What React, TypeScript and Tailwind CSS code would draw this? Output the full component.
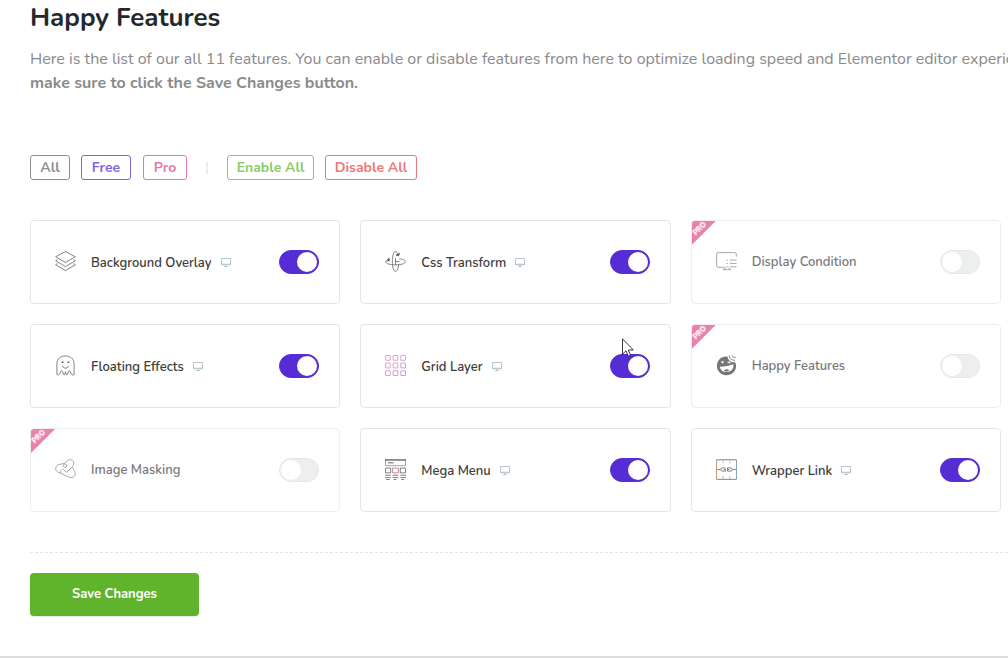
import React, { useState } from 'react';

interface Feature {
  id: string;
  label: string;
  icon: React.FC;
  isPro?: boolean;
}

const iconProps = {
  className: 'w-[21px] h-[21px] mb-[2px] shrink-0',
  viewBox: '0 0 22 22',
  fill: 'none',
  stroke: '#5c5c5c',
  strokeWidth: 0.8,
  'aria-hidden': true,
} as const;

const LayersIcon = () => (
  <svg {...iconProps}>
    <path d="M11 0.6 21.3 6 11 12 0.7 6Z" />
    <path d="M2.600 9 0.700 10.200 11 16.300 21.300 10.200 19.400 9M2.600 13 0.700 14.400 11 20.600 21.300 14.400 19.400 13" />
  </svg>
);

const TransformIcon = () => (
  <svg {...iconProps}>
    <path d="M14 4.600C13.500 2.200 12.400 0.600 11 0.600 9 0.600 7.700 5 7.700 11S9 21.200 11 21.200c1.800 0 3.100-3 3.300-7.200" />
    <path d="M4.500 9C2.200 9.500 0.700 10.300 0.700 11.200c0 2 4.600 3.300 10.300 3.300s10.300-1.300 10.300-3.300c0-1.500-2.600-2.600-6.300-3.100" />
    <path d="M11 7.500v7M11 11h4" />
    <path d="M15.200 2.500 14.200 5.200 11.600 4.200ZM3.800 7.300 5 9.600 2.800 10.800Z" fill="#555" />
  </svg>
);

const DisplayIcon = () => (
  <svg {...iconProps}>
    <path d="M9 17H2.200Q.7 17 .7 15.500V3.200Q.7 1.700 2.200 1.700H19.800Q21.300 1.700 21.300 3.200V6" />
    <path d="M11 9.500h1.500M14.500 9.500h7M11 13h1.500M14.500 13h7M11 16.500h1.500M14.500 16.500h7M10.500 17.500 7.500 19.500M13 17.500l2.500 2M7.500 19.500h8" />
  </svg>
);

const GhostIcon = () => (
  <svg {...iconProps}>
    <path d="M2 20.500V9C2 4 6 1 11 1s9 3 9 8v11.500q-2 1.200-3-.8l-1-2.500q-1-1.500-2 0l-.8 3q-.8 1-1.600 0l-.6-2.500-.6 2.500q-.8 1-1.600 0L8 17.200q-1-1.500-2 0l-1 2.500q-1 2-3 .8Z" />
    <path d="M7.300 11.800q3.700 4 7.400 0" />
    <path d="M7 7.500h2M13 7.500h2" strokeWidth="1.600" />
  </svg>
);

const GridIcon = () => (
  <svg {...iconProps} stroke="url(#gridTint)">
    <defs>
      <linearGradient id="gridTint" x1="0" y1="0" x2="22" y2="22" gradientUnits="userSpaceOnUse">
        <stop offset="0" stopColor="#f277a6" />
        <stop offset="0.5" stopColor="#d183bd" />
        <stop offset="1" stopColor="#9a78d8" />
      </linearGradient>
    </defs>
    {[0.5, 8.5, 16.5].map((y) =>
      [0.5, 8.5, 16.5].map((x) => <rect key={`${x}-${y}`} x={x} y={y} width="5" height="5" rx="0.5" />)
    )}
  </svg>
);

const HappyIcon = () => (
  <svg {...iconProps} stroke="none">
    <path
      fill="#3c3c3c"
      d="M12 1.600C5.500.9 1 5.500 1 11.500c0 5.500 4.500 9.700 10 9.700s10-4.200 10-9.700c0-1.400-.3-2.700-.9-3.900-4 .6-7.400-1.800-8.100-6Z"
    />
    <circle cx="6.800" cy="7.500" r="1.200" fill="#fff" />
    <path d="M11.800 7.800q1.800-2 3.600.4l-.8.8q-1.200-1.300-2-.6ZM4 12.200q7.500.2 14-2.400c1 4-1.700 7.800-6.500 8C7.500 18 4.300 15.500 4 12.200Z" fill="#fff" />
    <path d="M8.200 16.600q2.600-2.800 5.800-.6-2.800 2.600-5.800.6Z" fill="#3c3c3c" />
    <path d="M13.800.4q.5 4.900 6.200 5.200M16.500.4q.7 2.300 4.200 2.500" stroke="#3c3c3c" strokeWidth="0.900" fill="none" />
  </svg>
);

const MaskIcon = () => (
  <svg {...iconProps}>
    <path d="M6 5.300c3.500-.2 4.800-1.300 6.500-3.300 2-2 6-1.500 7 .8.800 2-.6 4-1 6-.3 2 2.700 3.500 2.700 6.500 0 3.500-3.500 5-7 3.500-4-1.500-6.200-3.300-9-4C2.500 14 .7 12.500.7 10 .7 7.500 3 5.500 6 5.300Z" />
    <path d="M5 13.500 7.500 11M8.500 10.500 12 14l5.500-5.500M17.500 8.500l-4 4.300M5 13.500l1.500 1.300" />
    <circle cx="10.500" cy="7" r="1.800" />
  </svg>
);

const MenuIcon = () => (
  <svg {...iconProps}>
    <path d="M.5 1v6h21V1" stroke="#7d8790" />
    <path d="M0 1h22" stroke="#444" strokeWidth="1.200" />
    <path d="M3 4h6" strokeWidth="1" />
    <path d="M.5 9.500h5.500v5H.5ZM16 9.500h5.500v5H16Z" />
    <path d="M8 9.500h6v5H8Z" stroke="#b0647c" />
    <path d="M0 17h6M8 17h6M16 17h6M0 19.500h6M8 19.500h6M16 19.500h6M1 21.500h4M9 21.500h3M17 21.500h3" />
  </svg>
);

const WrapperIcon = () => (
  <svg {...iconProps}>
    <rect x="0.500" y="0.800" width="21" height="20.500" rx="0.500" />
    <path d="M.5 11h4M17.500 11h4" />
    <path d="M10 9.300H6.500q-1.500 0-1.500 1.700t1.500 1.700H10V11H8M12 11h2M12 9.300h3.500q1.500 0 1.500 1.700t-1.500 1.700H12Z" />
    <path d="M.5 2v18M7.500 1v3.500M7.500 17.500V21" stroke="#dda468" />
    <path d="M21.500 2v18M14.500 1v3.500M14.500 17.500V21" stroke="#7fb2e0" />
  </svg>
);

const MonitorIcon = () => (
  <svg className="w-[10px] h-[10px] shrink-0" viewBox="0 0 10 10" fill="none" aria-hidden="true">
    <rect x="0.500" y="0.500" width="9" height="6" stroke="#bcc8cf" />
    <path d="M0 6.500h10" stroke="#bcc8cf" strokeWidth="1.500" />
    <path d="M3 8.500h4M4.500 7.500h1" stroke="#bcc8cf" />
  </svg>
);

const features: Feature[] = [
  { id: 'background-overlay', label: 'Background Overlay', icon: LayersIcon },
  { id: 'css-transform', label: 'Css Transform', icon: TransformIcon },
  { id: 'display-condition', label: 'Display Condition', icon: DisplayIcon, isPro: true },
  { id: 'floating-effects', label: 'Floating Effects', icon: GhostIcon },
  { id: 'grid-layer', label: 'Grid Layer', icon: GridIcon },
  { id: 'happy-features', label: 'Happy Features', icon: HappyIcon, isPro: true },
  { id: 'image-masking', label: 'Image Masking', icon: MaskIcon, isPro: true },
  { id: 'mega-menu', label: 'Mega Menu', icon: MenuIcon },
  { id: 'wrapper-link', label: 'Wrapper Link', icon: WrapperIcon },
];

const freeIds = features.filter((f) => !f.isPro).map((f) => f.id);

const Pointer = () => (
  <svg className="absolute right-[36px] top-[13px] w-[12px] h-[19px] z-10" viewBox="0 0 12 19" aria-hidden="true">
    <path d="M.5.8v15.400l3.500-3.400 2.300 5.400 2.300-1-2.300-5.200h5Z" fill="#fff" stroke="#222" strokeWidth="0.900" />
  </svg>
);

interface CardProps {
  feature: Feature;
  enabled: boolean;
  onToggle: () => void;
}

const FeatureCard: React.FC<CardProps> = ({ feature, enabled, onToggle }) => {
  const Icon = feature.icon;
  return (
    <div
      className={`relative flex items-center h-[84px] pl-6 pr-5 rounded border border-[#e5e5e5] bg-white ${
        feature.isPro ? 'opacity-70' : ''
      }`}
    >
      {feature.isPro && (
        <span className="absolute left-0 top-0 w-6 h-6 rounded-tl-[3px] bg-[#e2498a] [clip-path:polygon(0_0,100%_0,0_100%)]">
          <span className="absolute left-0 top-1 w-4 text-center text-[7px] leading-[8px] font-black text-white -rotate-45">
            PRO
          </span>
        </span>
      )}
      <Icon />
      <label
        htmlFor={feature.id}
        className={`ml-[15px] text-[13px] leading-5 font-semibold text-[#3c3c3c] whitespace-nowrap ${feature.isPro ? '' : 'pt-[2px]'}`}
      >
        {feature.label}
      </label>
      {!feature.isPro && (
        <span className="ml-[9px] pt-[2px]">
          <MonitorIcon />
        </span>
      )}
      <input
        id={feature.id}
        type="checkbox"
        checked={enabled}
        disabled={feature.isPro}
        onChange={onToggle}
        className="ml-auto shrink-0 appearance-none w-10 h-6 p-px rounded-full bg-[#e6e8e7] border border-[#dddddd] checked:bg-[#562dd4] checked:border-[#562dd4] before:block before:w-5 before:h-5 before:rounded-full before:bg-white checked:before:translate-x-4"
      />
      {feature.id === 'grid-layer' && <Pointer />}
    </div>
  );
};

const filterBase = 'h-[25px] rounded-[3px] border text-[14px] leading-[23px] font-bold whitespace-nowrap';

export default function App() {
  const [filter, setFilter] = useState<'all' | 'free' | 'pro'>('all');
  const [enabled, setEnabled] = useState<string[]>(freeIds);

  const toggle = (id: string) =>
    setEnabled((prev) => (prev.includes(id) ? prev.filter((x) => x !== id) : [...prev, id]));

  const visible = features.filter((f) => filter === 'all' || (filter === 'pro') === !!f.isPro);

  return (
    <div className="min-h-screen bg-[#f1f1f1] overflow-hidden font-['Nunito','Lato',sans-serif]">
      <main className="pl-[30px] bg-white border-b-2 border-[#dcdcdc]">
        <h1 className="h-[47px] text-[26px] leading-[36px] font-bold text-[#23282d]">Happy Features</h1>
        <p className="text-[16px] leading-6 text-[#8a8a8a] whitespace-nowrap">
          Here is the list of our all 11 features. You can enable or disable features from here to optimize loading speed and
          Elementor editor experience.
          <br />
          <strong className="font-bold">make sure to click the Save Changes button.</strong>
        </p>

        <div className="flex items-center mt-[60px]">
          <button onClick={() => setFilter('all')} className={`${filterBase} w-10 border-[#8e8e8e] text-[#8e8e8e]`}>
            All
          </button>
          <button onClick={() => setFilter('free')} className={`${filterBase} ml-[11px] w-[50px] border-[#8266e0] text-[#8266e0]`}>
            Free
          </button>
          <button onClick={() => setFilter('pro')} className={`${filterBase} ml-3 w-11 border-[#ea75a8] text-[#ea75a8]`}>
            Pro
          </button>
          <span className="mx-[19px] w-[2px] h-3 bg-[#eeeeee]" />
          <button onClick={() => setEnabled(freeIds)} className={`${filterBase} w-[87px] border-[#8cca69] text-[#8cca69]`}>
            Enable All
          </button>
          <button onClick={() => setEnabled([])} className={`${filterBase} ml-[11px] w-[92px] border-[#ee7777] text-[#ee7777]`}>
            Disable All
          </button>
        </div>

        <div className="grid grid-cols-3 gap-5 mt-10 mr-[7px]">
          {visible.map((f) => (
            <FeatureCard key={f.id} feature={f} enabled={enabled.includes(f.id)} onToggle={() => toggle(f.id)} />
          ))}
        </div>

        <div className="mt-10 pt-5 pb-10 border-t border-dashed border-[#e5e5e5]">
          <button className="block w-[169px] h-[43px] rounded bg-[#5fb42c] shadow-[0_1px_1px_rgba(0,0,0,0.1)] text-[13px] font-bold text-white">
            Save Changes
          </button>
        </div>
      </main>
    </div>
  );
}
